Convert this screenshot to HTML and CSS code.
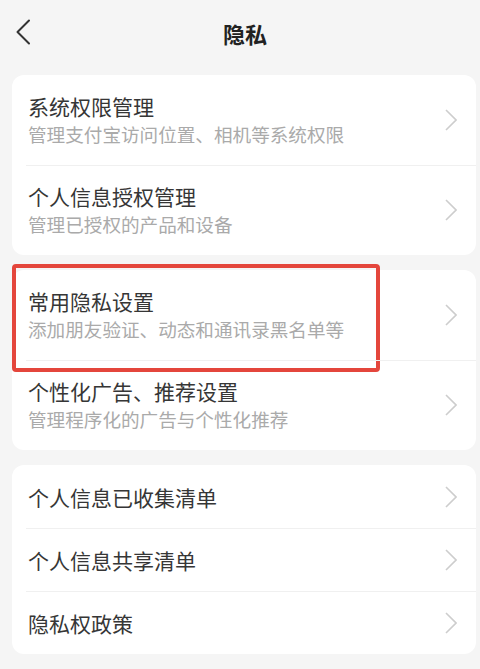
FILE: index.html
```html
<!DOCTYPE html>
<html lang="zh-CN">
<head>
<meta charset="utf-8">
<title>隐私</title>
<link rel="stylesheet" href="styles.css">
</head>
<body>
<header class="nav">
  <svg class="back" width="16" height="26" viewBox="0 0 16 26"><polyline points="14,1.5 2.5,13 14,24.5" fill="none" stroke="#333" stroke-width="2" stroke-linecap="round" stroke-linejoin="round"/></svg>
  <h1 class="nav-title">隐私</h1>
</header>
<main class="list">
  <section class="card">
    <div class="row">
      <div class="text"><div class="title">系统权限管理</div><div class="sub">管理支付宝访问位置、相机等系统权限</div></div>
      <svg class="chev" width="12" height="22" viewBox="0 0 12 22"><polyline points="1,1 11,11 1,21" fill="none" stroke="#cdcdcd" stroke-width="1.6"/></svg>
    </div>
    <div class="row">
      <div class="text"><div class="title">个人信息授权管理</div><div class="sub">管理已授权的产品和设备</div></div>
      <svg class="chev" width="12" height="22" viewBox="0 0 12 22"><polyline points="1,1 11,11 1,21" fill="none" stroke="#cdcdcd" stroke-width="1.6"/></svg>
    </div>
  </section>
  <section class="card">
    <div class="row highlighted">
      <div class="text"><div class="title">常用隐私设置</div><div class="sub">添加朋友验证、动态和通讯录黑名单等</div></div>
      <svg class="chev" width="12" height="22" viewBox="0 0 12 22"><polyline points="1,1 11,11 1,21" fill="none" stroke="#cdcdcd" stroke-width="1.6"/></svg>
      <span class="mark"></span>
    </div>
    <div class="row">
      <div class="text"><div class="title">个性化广告、推荐设置</div><div class="sub">管理程序化的广告与个性化推荐</div></div>
      <svg class="chev" width="12" height="22" viewBox="0 0 12 22"><polyline points="1,1 11,11 1,21" fill="none" stroke="#cdcdcd" stroke-width="1.6"/></svg>
    </div>
  </section>
  <section class="card">
    <div class="row single">
      <div class="text"><div class="title">个人信息已收集清单</div></div>
      <svg class="chev" width="12" height="22" viewBox="0 0 12 22"><polyline points="1,1 11,11 1,21" fill="none" stroke="#cdcdcd" stroke-width="1.6"/></svg>
    </div>
    <div class="row single">
      <div class="text"><div class="title">个人信息共享清单</div></div>
      <svg class="chev" width="12" height="22" viewBox="0 0 12 22"><polyline points="1,1 11,11 1,21" fill="none" stroke="#cdcdcd" stroke-width="1.6"/></svg>
    </div>
    <div class="row single">
      <div class="text"><div class="title">隐私权政策</div></div>
      <svg class="chev" width="12" height="22" viewBox="0 0 12 22"><polyline points="1,1 11,11 1,21" fill="none" stroke="#cdcdcd" stroke-width="1.6"/></svg>
    </div>
  </section>
</main>
</body>
</html>
```
FILE: styles.css
```css
* { box-sizing: border-box; }
html, body { margin: 0; padding: 0; }
body {
  width: 480px;
  height: 669px;
  overflow: hidden;
  background: #f5f5f5;
  font-family: "Noto Sans CJK SC", "Noto Sans", sans-serif;
  color: #333;
}
.nav {
  position: relative;
  height: 66px;
  display: flex;
  align-items: center;
  justify-content: center;
}
.back {
  position: absolute;
  left: 15px;
  top: 19px;
}
.nav-title {
  margin: 0;
  font-size: 22px;
  font-weight: 700;
  color: #222;
  line-height: 30px;
  padding-left: 10px;
}
.list {
  padding: 9px 4px 0 12px;
  display: flex;
  flex-direction: column;
  gap: 15px;
}
.card {
  background: #fff;
  border-radius: 12px;
  overflow: visible;
}
.row {
  position: relative;
  display: flex;
  align-items: center;
  justify-content: space-between;
  height: 90px;
  padding: 0 19px 0 16px;
}
.row + .row::before {
  content: "";
  position: absolute;
  left: 14px;
  right: 0;
  top: 0;
  height: 1px;
  background: #f0f0f0;
}
.row.single { height: 63px; }
.text { display: flex; flex-direction: column; padding-bottom: 1px; }
.title {
  font-size: 21px;
  line-height: 27px;
  color: #363636;
}
.sub {
  font-size: 18.6px;
  line-height: 27px;
  color: #aaa;
}
.row.single .text { padding-top: 2px; padding-bottom: 0; }
.chev { flex: none; }
.mark {
  position: absolute;
  left: 0;
  top: -6px;
  width: 368px;
  height: 108px;
  border: 4px solid #e4463c;
  border-radius: 4px;
  pointer-events: none;
}
```
